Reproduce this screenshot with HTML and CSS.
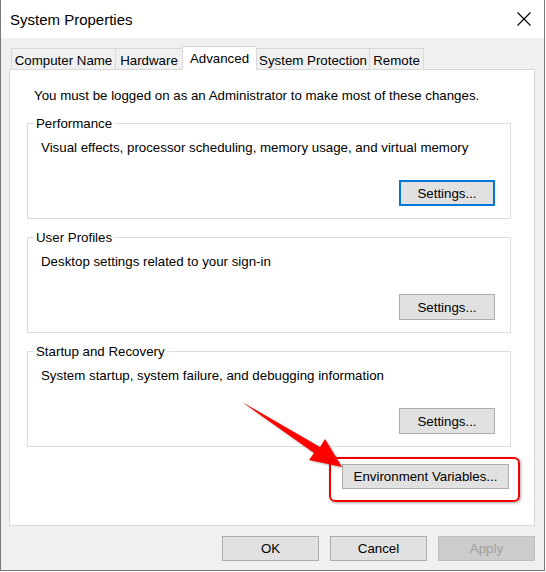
FILE: index.html
```html
<!DOCTYPE html>
<html lang="en">
<head>
    <meta charset="UTF-8">
    <meta name="viewport" content="width=device-width, initial-scale=1.0">
    <title>System Properties</title>
    <link rel="stylesheet" href="styles.css">
</head>
<body>
    <div class="window">
        <div class="titlebar">
            <span class="title">System Properties</span>
            <button class="close" aria-label="Close">
                <svg width="14" height="14" viewBox="0 0 14 14">
                    <path d="M0.5 0.5 L13.5 13.5 M13.5 0.5 L0.5 13.5" stroke="#000" stroke-width="1.1" fill="none"/>
                </svg>
            </button>
        </div>

        <div class="dialog">
            <div class="tabs">
                <div class="tab tab-name">Computer Name</div>
                <div class="tab tab-hw">Hardware</div>
                <div class="tab tab-adv active">Advanced</div>
                <div class="tab tab-prot">System Protection</div>
                <div class="tab tab-remote last">Remote</div>
            </div>

            <div class="panel">
                <p class="intro">You must be logged on as an Administrator to make most of these changes.</p>

                <fieldset class="group first">
                    <legend>Performance</legend>
                    <p class="group-text">Visual effects, processor scheduling, memory usage, and virtual memory</p>
                    <div class="group-actions">
                        <button class="btn btn-settings focused">Settings...</button>
                    </div>
                </fieldset>

                <fieldset class="group">
                    <legend>User Profiles</legend>
                    <p class="group-text">Desktop settings related to your sign-in</p>
                    <div class="group-actions">
                        <button class="btn btn-settings">Settings...</button>
                    </div>
                </fieldset>

                <fieldset class="group">
                    <legend>Startup and Recovery</legend>
                    <p class="group-text">System startup, system failure, and debugging information</p>
                    <div class="group-actions">
                        <button class="btn btn-settings">Settings...</button>
                    </div>
                </fieldset>

                <div class="panel-actions">
                    <button class="btn btn-env">Environment Variables...</button>
                </div>
            </div>

            <div class="dialog-actions">
                <button class="btn btn-dialog">OK</button>
                <button class="btn btn-dialog">Cancel</button>
                <button class="btn btn-dialog" disabled>Apply</button>
            </div>
        </div>

        <!-- callout: arrow + ring around the Environment Variables button -->
        <svg class="arrow" width="110" height="76" viewBox="0 0 110 76">
            <polygon points="6,6 84,51 89,43 106,71 73,64 78,57" fill="#ff0000"/>
        </svg>
        <div class="highlight"></div>
    </div>
</body>
</html>
```

FILE: styles.css
```css
* {
    box-sizing: border-box;
}

body {
    margin: 0;
    background: #fff;
    font-family: "Liberation Sans", Arial, sans-serif;
    font-size: 13.3px;
    color: #000;
}

.window {
    position: relative;
    width: 545px;
    height: 571px;
    background: #f0f0f0;
    border: 1px solid #7a7a7a;
    border-top: none;
}

.titlebar {
    display: flex;
    align-items: center;
    height: 38px;
    padding-left: 9px;
    background: #fff;
}

.title {
    font-size: 15px;
}

.close {
    display: flex;
    margin-left: auto;
    margin-right: 13px;
    padding: 0;
    border: none;
    background: transparent;
}

.dialog {
    padding: 0 9px 0 8px;
}

/* tab strip */
.tabs {
    display: flex;
    align-items: flex-end;
    padding: 8px 0 0 2px;
}

.tab {
    height: 21px;
    padding-top: 4px;
    line-height: 15px;
    text-align: center;
    white-space: nowrap;
    border: 1px solid #d9d9d9;
    border-right: none;
    border-bottom: none;
    background: #f0f0f0;
}

.tab-name { width: 104px; }
.tab-hw { width: 67px; }
.tab-adv { width: 74px; }
.tab-prot { width: 113px; }
.tab-remote { width: 55px; }

.tab.last {
    border-right: 1px solid #d9d9d9;
}

.tab.active {
    position: relative;
    z-index: 1;
    height: 24px;
    margin-bottom: -1px;
    background: #fff;
}

.panel {
    height: 457px;
    padding: 18px 23px 0 17px;
    background: #fff;
    border: 1px solid #d9d9d9;
}

.intro {
    margin: 0 0 0 7px;
    line-height: 15px;
}

/* group boxes */
.group {
    margin: 11px 0 0;
    padding: 0 15px 12px 0;
    border: 1px solid #dcdcdc;
    min-width: 0;
}

.group.first {
    margin-top: 13px;
}

.group legend {
    margin-left: 6px;
    padding: 0 2px;
    line-height: 15px;
}

.group-text {
    margin: 9px 0 0 13px;
    line-height: 15px;
}

.group-actions {
    display: flex;
    justify-content: flex-end;
    margin-top: 25px;
}

/* buttons */
.btn {
    font-family: inherit;
    font-size: 13.3px;
    color: #000;
    background: #e1e1e1;
    border: 1px solid #adadad;
    padding: 0;
}

.btn-settings {
    width: 96px;
    height: 26px;
}

.btn.focused {
    border: 2px solid #0078d7;
}

.panel-actions {
    display: flex;
    justify-content: flex-end;
    margin-top: 17px;
    margin-right: 2px;
}

.btn-env {
    width: 167px;
    height: 25px;
}

.dialog-actions {
    display: flex;
    justify-content: flex-end;
    gap: 11px;
    margin-top: 10px;
}

.btn-dialog {
    width: 97px;
    height: 25px;
}

.btn:disabled {
    color: #a0a0a0;
    background: #cccccc;
    border-color: #bfbfbf;
}

/* annotation overlay */
.arrow {
    position: absolute;
    left: 235px;
    top: 396px;
    filter: drop-shadow(1px 1px 1px rgba(0, 0, 0, 0.3));
}

.highlight {
    position: absolute;
    left: 328px;
    top: 457px;
    width: 191px;
    height: 45px;
    border: 2px solid #f00000;
    border-radius: 6px;
    box-shadow: 1px 1px 3px rgba(0, 0, 0, 0.35);
}
```
